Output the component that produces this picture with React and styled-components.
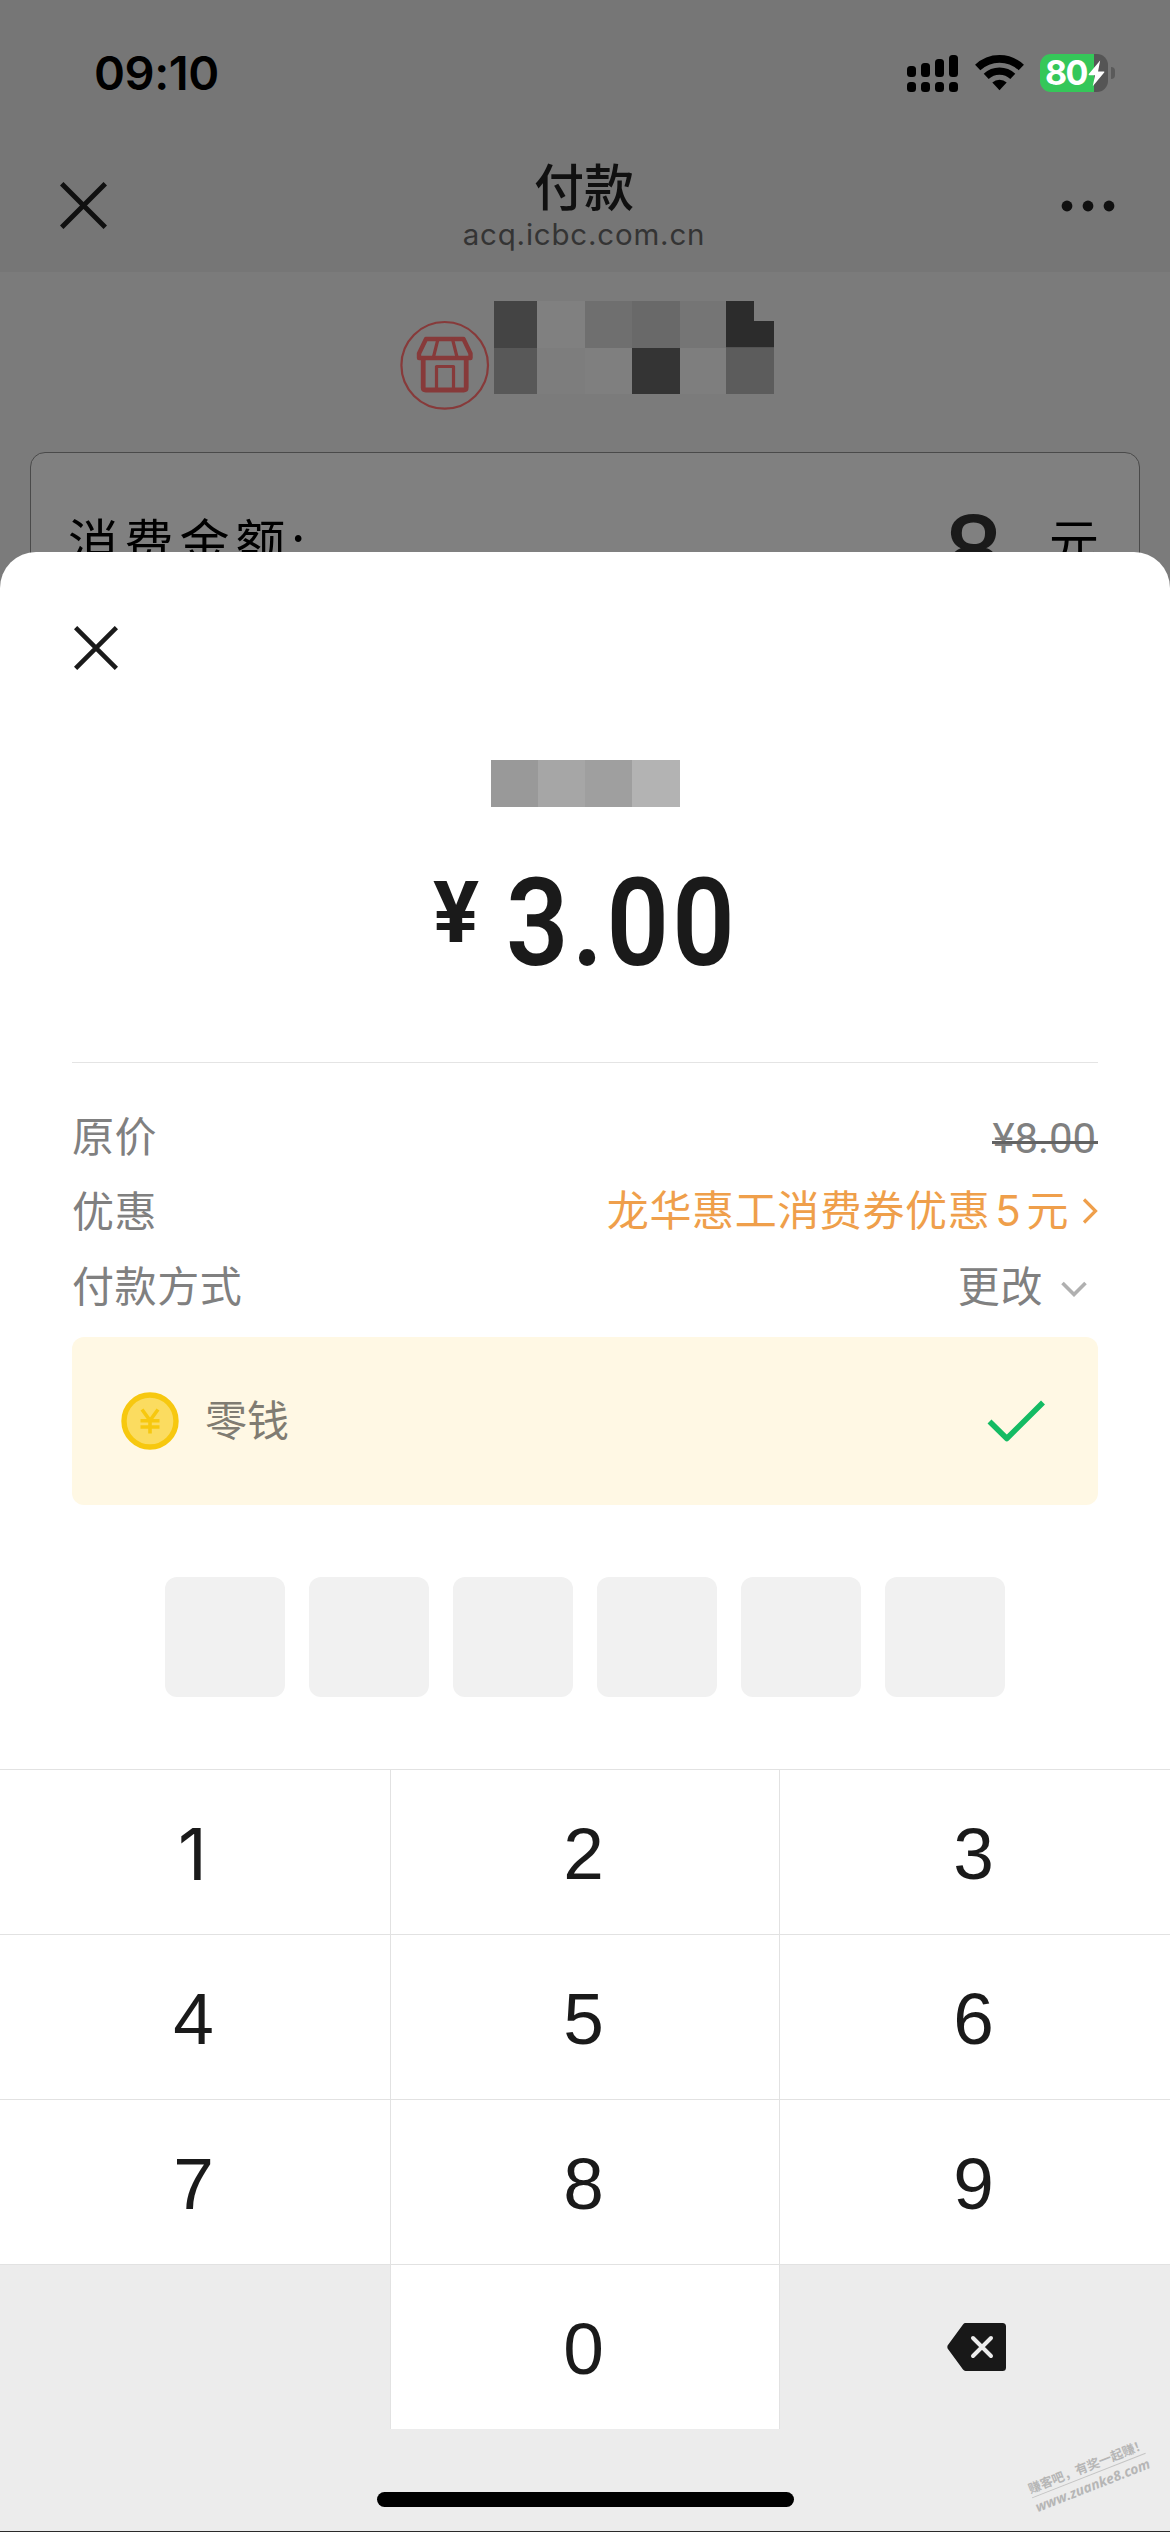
import React from "react";
import styled, { createGlobalStyle } from "styled-components";

const cjk = `"Noto Sans CJK SC", sans-serif`;

const GlobalStyle = createGlobalStyle`
  * { box-sizing: border-box; }
  body { margin: 0; background: #7b7b7b; }
  button { border: 0; padding: 0; background: none; font: inherit; color: inherit; }
`;

const Screen = styled.div`
  position: relative;
  width: 1170px;
  height: 2532px;
  overflow: hidden;
  background: #7b7b7b;
  font-family: Inter, ${cjk};
  color: #1a1a1a;
  border-bottom: 1px solid #2a2a2a;
`;

const StatusBar = styled.div`
  display: flex;
  justify-content: space-between;
  align-items: center;
  height: 146px;
  padding: 0 55px 0 94px;
  background: #767676;
`;

const Clock = styled.span`
  font-size: 47px;
  font-weight: 560;
  line-height: 56px;
  letter-spacing: -0.4px;
  color: #000;
`;

const StatusIcons = styled.div`
  display: flex;
  align-items: center;
  gap: 16.5px;
`;

const BatteryWrap = styled.div`
  display: flex;
  align-items: center;
  gap: 3px;
`;

const Battery = styled.div`
  display: flex;
  align-items: center;
  width: 68px;
  height: 38px;
  padding-left: 5px;
  border-radius: 11px;
  background: linear-gradient(90deg, #35c759 54px, #555 54px);
  color: #fff;
`;

const BatteryLevel = styled.span`
  font-size: 34px;
  font-weight: 700;
  line-height: 38px;
  letter-spacing: -1.6px;
  width: 43px;
`;

const BatteryNub = styled.span`
  width: 4px;
  height: 12px;
  border-radius: 0 5px 5px 0;
  background: #5a5a5a;
`;

const NavBar = styled.header`
  display: grid;
  grid-template-columns: 200px 1fr 208px;
  align-items: center;
  height: 126px;
  padding: 0 54px 0 60px;
  background: #767676;
  color: #101010;
`;

const NavSide = styled.div`
  display: flex;
  justify-content: ${(p) => p.$align};
  height: 100%;
  padding-top: 36px;
`;

const NavTitles = styled.div`
  display: flex;
  flex-direction: column;
  align-items: center;
  height: 100%;
  padding-top: 10px;
`;

const NavTitle = styled.h1`
  margin: 0;
  font: 500 50px/56px ${cjk};
`;

const NavHost = styled.span`
  margin-top: 4px;
  font-size: 29.5px;
  line-height: 36px;
  letter-spacing: 0.8px;
  color: #343434;
`;

const Merchant = styled.section`
  display: flex;
  align-items: flex-start;
  height: 180px;
  padding: 29px 0 0 400px;
`;

const ShopIcon = styled.svg`
  margin-top: 19px;
  margin-right: 4px;
`;

const Mosaic = styled.div`
  display: grid;
  grid-template-columns: ${(p) => p.$columns};
  grid-auto-rows: ${(p) => p.$row}px;
`;

const Tile = styled.span`
  background: ${(p) => p.$tone};
  clip-path: ${(p) => (p.$notched ? "polygon(0 0, 28px 0, 28px 20px, 100% 20px, 100% 100%, 0 100%)" : "none")};
`;

const AmountCard = styled.section`
  display: flex;
  height: 220px;
  margin: 0 30px;
  padding: 34px 40px 0 37px;
  border: 1px solid #4a4a4a;
  border-radius: 15px;
  background: #808080;
  color: #000;
  font: 400 50px/74px ${cjk};
`;

const AmountLabel = styled.span`
  flex: 1;
  padding-top: 15px;
  letter-spacing: 5.8px;
`;

const AmountValue = styled.span`
  width: 56px;
  margin-right: 47px;
  padding-top: 23px;
  font: 400 99px/80px "Liberation Sans", sans-serif;
  -webkit-text-stroke: 2px #1a1a1a;
  color: #1a1a1a;
`;

const AmountUnit = styled.span`
  padding-top: 15px;
`;

const Sheet = styled.main`
  position: absolute;
  left: 0;
  right: 0;
  bottom: 0;
  display: flex;
  flex-direction: column;
  height: 1979px;
  border-radius: 36px 36px 0 0;
  background: #fff;
  overflow: hidden;
`;

const SheetHead = styled.div`
  height: 208px;
  padding: 74px 0 0 74px;
`;

const Payee = styled.div`
  display: flex;
  justify-content: center;
  height: 100px;
`;

const Price = styled.div`
  display: flex;
  justify-content: center;
  height: 202px;
  padding-left: 30px;
  font-family: Roboto, sans-serif;
`;

const Currency = styled.span`
  margin-right: 27px;
  padding-top: 3px;
  font-size: 86px;
  font-weight: 700;
  line-height: 100px;
`;

const PriceValue = styled.span`
  font-size: 123px;
  font-weight: 600;
  line-height: 126px;
  letter-spacing: 3.8px;
  transform: scaleX(0.89);
  transform-origin: left center;
`;

const Details = styled.div`
  display: flex;
  flex-direction: column;
  margin: 0 72px;
  padding-top: 33px;
  height: 275px;
  border-top: 1px solid #e4e4e4;
  color: #808080;
`;

const DetailRow = styled.div`
  display: flex;
  justify-content: space-between;
  align-items: center;
  height: 75px;
  font: 400 42px/75px ${cjk};
  letter-spacing: 0.6px;
`;

const OriginalPrice = styled.span`
  position: relative;
  margin-top: 10px;
  padding: 0 2px 0 1px;
  font-family: Roboto, sans-serif;
  line-height: 50px;
  letter-spacing: -0.1px;

  &::after {
    content: "";
    position: absolute;
    left: 0;
    right: 0;
    top: 27px;
    height: 3px;
    background: #626262;
  }
`;

const Link = styled.button`
  display: flex;
  align-items: center;
  gap: ${(p) => p.$gap}px;
  padding-right: ${(p) => p.$inset || 0}px;
  color: ${(p) => p.$tone};
  letter-spacing: 0.6px;
`;

const Arrow = styled.svg`
  margin-top: ${(p) => p.$drop}px;
`;

const Digit = styled.span`
  margin: 0 5px;
  font-family: Inter, sans-serif;
`;

const Method = styled.div`
  display: flex;
  align-items: center;
  height: 168px;
  margin: 0 72px;
  padding: 0 53px 0 49px;
  border-radius: 12px;
  background: #fff8e4;
`;

const MethodName = styled.span`
  flex: 1;
  margin-left: 26px;
  padding-bottom: 6px;
  font: 400 42px/60px ${cjk};
  color: #807c72;
`;

const Pin = styled.div`
  display: flex;
  justify-content: center;
  gap: 24px;
  height: 192px;
  margin-top: 72px;
`;

const PinBox = styled.span`
  width: 120px;
  height: 120px;
  border-radius: 12px;
  background: #f1f1f1;
`;

const Keypad = styled.div`
  display: grid;
  grid-template-columns: 391px 389px 390px;
  grid-auto-rows: 165px;
  background: #ececec;
`;

const Key = styled.button`
  display: flex;
  align-items: center;
  justify-content: center;
  padding: 4px 3px 0 0;
  border-top: 1px solid #e2e2e2;
  border-right: ${(p) => (p.$last ? "0" : "1px solid #e2e2e2")};
  background: ${(p) => (p.$muted ? "#ececec" : "#fff")};
  font: 400 73px/90px "Liberation Sans", sans-serif;
  color: #1a1a1a;
`;

const OneKey = styled(Key)`
  padding-right: 5px;
  font: 400 71px/90px Inter, sans-serif;
`;

const DeleteKey = styled(Key)`
  padding: 0 0 0 3px;
`;

const Footer = styled.div`
  display: flex;
  justify-content: center;
  flex: 1;
  padding-top: 63px;
  background: #ececec;
`;

const HomeIndicator = styled.span`
  width: 417px;
  height: 15px;
  border-radius: 8px;
  background: #000;
`;

const Watermark = styled.div`
  position: absolute;
  right: 20px;
  bottom: 36px;
  width: 122px;
  transform: rotate(-21.5deg);
  color: #b6b6b6;
  white-space: nowrap;
`;

const WatermarkSlogan = styled.div`
  border-bottom: 1px solid #c4c4c4;
  font: 700 12.6px/18px ${cjk};
`;

const WatermarkSite = styled.div`
  font: italic 700 13.8px/19px "Open Sans", sans-serif;
`;

const Cross = ({ size, color }) => (
  <svg width={size} height={size} viewBox="0 0 44 44" fill="none" stroke={color} strokeWidth="4.6">
    <path d="M1.6 1.6 42.4 42.4M42.4 1.6 1.6 42.4" />
  </svg>
);

const Signal = () => (
  <svg width="51" height="38" viewBox="0 0 51 38">
    {[12, 9, 5, 1].map((top, i) => (
      <g key={top}>
        <rect x={i * 14} y={top} width="9" height={23 - top} rx="3.5" />
        <rect x={i * 14} y="28" width="9" height="10" rx="3.5" />
      </g>
    ))}
  </svg>
);

const Wifi = () => (
  <svg width="49" height="38" viewBox="0 0 49 38" fill="none" stroke="#000">
    <path d="M2.7 13.6a31.5 31.5 0 0 1 43.6 0" strokeWidth="7.6" />
    <path d="M11.2 22.4a19.4 19.4 0 0 1 26.6 0" strokeWidth="7.2" />
    <path d="M24.5 36.2 17.3 28.6a10.5 10.5 0 0 1 14.4 0Z" fill="#000" stroke="none" />
  </svg>
);

const Bolt = () => (
  <svg width="17" height="27" viewBox="0 0 16 26" fill="#fff">
    <path d="M11.5.5.6 13.6c-.4.5-.1 1 .5 1h5.5L4.4 25.2 15.4 12c.4-.5.1-1-.5-1H9.500Z" />
  </svg>
);

const More = () => (
  <svg width="56" height="48" viewBox="0 -18 54 48" fill="#101010">
    <circle cx="6" cy="6" r="5.4" />
    <circle cx="27" cy="6" r="5.4" />
    <circle cx="48" cy="6" r="5.4" />
  </svg>
);

const Shop = () => (
  <ShopIcon width="90" height="90" viewBox="0 0 90 90" fill="none" stroke="#873a3a" strokeLinejoin="round">
    <circle cx="44.7" cy="45.3" r="43.3" strokeWidth="2.2" />
    <path d="M26 19h37.500l7 14.500v4.500h-51.500v-4.500Z" strokeWidth="4.400" />
    <path d="M38 19l-4.500 18M52.500 19l4.500 18" strokeWidth="3.200" />
    <path d="M23.200 39v28.500q0 2.500 2.500 2.500h38q2.500 0 2.500-2.500v-28.500" strokeWidth="4.800" />
    <path d="M36.500 69v-22.500h17v22.500" strokeWidth="3.200" />
  </ShopIcon>
);

const Coin = () => (
  <svg width="58" height="58" viewBox="0 0 58 58" fill="none" stroke="#f7c80f">
    <circle cx="29" cy="29" r="26" fill="#fbdc60" strokeWidth="5.400" />
    <path d="M21 17.500 29 28.500 37 17.500M29 28v13.500M19.500 28.800h19M19.500 35h19" strokeWidth="3.600" />
  </svg>
);

const Backspace = () => (
  <svg width="59" height="48" viewBox="0 0 59 48">
    <path d="M18.500 0H55.500Q59 0 59 3.500V44.500Q59 48 55.500 48H18.500Q17 48 16 46.600L.6 25.400Q0 24 .6 22.600L16 1.400Q17 0 18.500 0Z" fill="#181818" />
    <path d="M26 15 44 33M44 15 26 33" stroke="#ececec" strokeWidth="4" strokeLinecap="round" />
  </svg>
);

const merchantTiles = [
  "#444", "#808080", "#6f6f6f", "#696969", "#757575", "#2c2c2c",
  "#585858", "#7d7d7d", "#7f7f7f", "#343434", "#7e7e7e", "#5c5c5c",
];
const payeeTiles = ["#999", "#a6a6a6", "#9f9f9f", "#b3b3b3"];
const digits = ["2", "3", "4", "5", "6", "7", "8", "9"];

export default function App() {
  return (
    <Screen>
      <GlobalStyle />
      <StatusBar>
        <Clock>09:10</Clock>
        <StatusIcons>
          <Signal />
          <Wifi />
          <BatteryWrap>
            <Battery>
              <BatteryLevel>80</BatteryLevel>
              <Bolt />
            </Battery>
            <BatteryNub />
          </BatteryWrap>
        </StatusIcons>
      </StatusBar>
      <NavBar>
        <NavSide $align="flex-start">
          <Cross size={47} color="#101010" />
        </NavSide>
        <NavTitles>
          <NavTitle>付款</NavTitle>
          <NavHost>acq.icbc.com.cn</NavHost>
        </NavTitles>
        <NavSide $align="flex-end">
          <More />
        </NavSide>
      </NavBar>
      <Merchant>
        <Shop />
        <Mosaic $columns="43px 48px 47px 48px 46px 48px" $row={46.5}>
          {merchantTiles.map((tone, i) => (
            <Tile key={i} $tone={tone} $notched={i === 5} />
          ))}
        </Mosaic>
      </Merchant>
      <AmountCard>
        <AmountLabel>消费金额:</AmountLabel>
        <AmountValue>8</AmountValue>
        <AmountUnit>元</AmountUnit>
      </AmountCard>

      <Sheet>
        <SheetHead>
          <Cross size={44} color="#1a1a1a" />
        </SheetHead>
        <Payee>
          <Mosaic $columns="repeat(4, 47.25px)" $row={46.5}>
            {payeeTiles.map((tone) => (
              <Tile key={tone} $tone={tone} />
            ))}
          </Mosaic>
        </Payee>
        <Price>
          <Currency>¥</Currency>
          <PriceValue>3.00</PriceValue>
        </Price>
        <Details>
          <DetailRow>
            <span>原价</span>
            <OriginalPrice>¥8.00</OriginalPrice>
          </DetailRow>
          <DetailRow>
            <span>优惠</span>
            <Link $tone="#ef9f4b" $gap={13}>
              <span>
                龙华惠工消费券优惠<Digit>5</Digit>元
              </span>
              <Arrow $drop={5} width="16" height="26" viewBox="0 0 16 26" fill="none" stroke="currentColor" strokeWidth="3.2">
                <path d="M2 1.500 13.500 13 2 24.500" />
              </Arrow>
            </Link>
          </DetailRow>
          <DetailRow>
            <span>付款方式</span>
            <Link $tone="#808080" $gap={18} $inset={11}>
              <span>更改</span>
              <Arrow $drop={10} width="26" height="16" viewBox="0 0 26 16" fill="none" stroke="#b0b0b0" strokeWidth="3.600">
                <path d="M1.500 2 13 13.500 24.500 2" />
              </Arrow>
            </Link>
          </DetailRow>
        </Details>
        <Method>
          <Coin />
          <MethodName>零钱</MethodName>
          <svg width="58" height="42" viewBox="0 0 58 42" fill="none" stroke="#14bb63" strokeWidth="5.600" strokeLinejoin="round">
            <path d="M2.500 21.500 19.800 38.500 56 2.500" />
          </svg>
        </Method>
        <Pin>
          {Array.from({ length: 6 }, (_, i) => (
            <PinBox key={i} />
          ))}
        </Pin>
        <Keypad>
          <OneKey>1</OneKey>
          {digits.map((d) => (
            <Key key={d} $last={Number(d) % 3 === 0}>{d}</Key>
          ))}
          <Key $muted aria-label="blank" />
          <Key>0</Key>
          <DeleteKey $muted $last aria-label="delete">
            <Backspace />
          </DeleteKey>
        </Keypad>
        <Footer>
          <HomeIndicator />
        </Footer>
        <Watermark>
          <WatermarkSlogan>赚客吧，有奖一起赚！</WatermarkSlogan>
          <WatermarkSite>www.zuanke8.com</WatermarkSite>
        </Watermark>
      </Sheet>
    </Screen>
  );
}
